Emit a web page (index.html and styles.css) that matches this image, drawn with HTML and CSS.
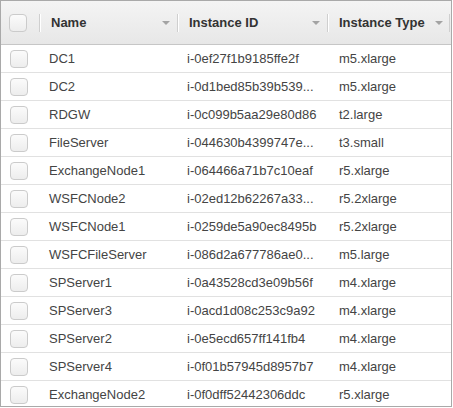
FILE: index.html
```html
<!DOCTYPE html>
<html>
<head>
<meta charset="utf-8">
<link rel="stylesheet" href="styles.css">
</head>
<body>
<div class="grid">
  <div class="row head">
    <div class="cbcell"><span class="cb"></span></div>
    <div class="hcell"><span>Name</span><i class="arrow"></i></div>
    <div class="hcell"><span>Instance ID</span><i class="arrow"></i></div>
    <div class="hcell last"><span>Instance Type</span><i class="arrow"></i></div>
    <div></div>
  </div>
  <div class="row"><div class="cbcell"><span class="cb"></span></div><div class="cell">DC1</div><div class="cell">i-0ef27f1b9185ffe2f</div><div class="cell type">m5.xlarge</div><div></div></div>
  <div class="row"><div class="cbcell"><span class="cb"></span></div><div class="cell">DC2</div><div class="cell">i-0d1bed85b39b539...</div><div class="cell type">m5.xlarge</div><div></div></div>
  <div class="row"><div class="cbcell"><span class="cb"></span></div><div class="cell">RDGW</div><div class="cell">i-0c099b5aa29e80d86</div><div class="cell type">t2.large</div><div></div></div>
  <div class="row"><div class="cbcell"><span class="cb"></span></div><div class="cell">FileServer</div><div class="cell">i-044630b4399747e...</div><div class="cell type">t3.small</div><div></div></div>
  <div class="row"><div class="cbcell"><span class="cb"></span></div><div class="cell">ExchangeNode1</div><div class="cell">i-064466a71b7c10eaf</div><div class="cell type">r5.xlarge</div><div></div></div>
  <div class="row"><div class="cbcell"><span class="cb"></span></div><div class="cell">WSFCNode2</div><div class="cell">i-02ed12b62267a33...</div><div class="cell type">r5.2xlarge</div><div></div></div>
  <div class="row"><div class="cbcell"><span class="cb"></span></div><div class="cell">WSFCNode1</div><div class="cell">i-0259de5a90ec8495b</div><div class="cell type">r5.2xlarge</div><div></div></div>
  <div class="row"><div class="cbcell"><span class="cb"></span></div><div class="cell">WSFCFileServer</div><div class="cell">i-086d2a677786ae0...</div><div class="cell type">m5.large</div><div></div></div>
  <div class="row"><div class="cbcell"><span class="cb"></span></div><div class="cell">SPServer1</div><div class="cell">i-0a43528cd3e09b56f</div><div class="cell type">m4.xlarge</div><div></div></div>
  <div class="row"><div class="cbcell"><span class="cb"></span></div><div class="cell">SPServer3</div><div class="cell">i-0acd1d08c253c9a92</div><div class="cell type">m4.xlarge</div><div></div></div>
  <div class="row"><div class="cbcell"><span class="cb"></span></div><div class="cell">SPServer2</div><div class="cell">i-0e5ecd657ff141fb4</div><div class="cell type">m4.xlarge</div><div></div></div>
  <div class="row"><div class="cbcell"><span class="cb"></span></div><div class="cell">SPServer4</div><div class="cell">i-0f01b57945d8957b7</div><div class="cell type">m4.xlarge</div><div></div></div>
  <div class="row"><div class="cbcell"><span class="cb"></span></div><div class="cell">ExchangeNode2</div><div class="cell">i-0f0dff52442306ddc</div><div class="cell type">r5.xlarge</div><div></div></div>
</div>
</body>
</html>
```
FILE: styles.css
```css
body {
  margin: 0;
  background: #fff;
  font-family: "Liberation Sans", Arial, sans-serif;
}
.grid {
  width: 452px;
  height: 407px;
  box-sizing: border-box;
  border: 1px solid #a9a9a9;
  overflow: hidden;
}
.row {
  display: grid;
  grid-template-columns: 38px 138px 150px 123px 1px;
  align-items: center;
  height: 28px;
  box-sizing: border-box;
  border-bottom: 1px solid #e1e1e1;
}
.head {
  height: 44px;
  border-bottom: 1px solid #c6c6c6;
  background: linear-gradient(#f4f4f4, #e7e7e7);
}
.cbcell {
  display: flex;
  align-items: center;
  padding-left: 9px;
}
.head .cbcell {
  padding-left: 8px;
}
.cb {
  display: block;
  width: 18px;
  height: 18px;
  box-sizing: border-box;
  border: 1px solid #cbcbcb;
  border-radius: 4px;
  background: linear-gradient(#fbfbfb, #ededed);
}
.hcell {
  position: relative;
  height: 100%;
  display: flex;
  align-items: center;
  justify-content: space-between;
  padding: 0 7px 0 12px;
  font-size: 13px;
  font-weight: bold;
  color: #333;
  white-space: nowrap;
}
.hcell::before {
  content: "";
  position: absolute;
  left: 0;
  top: 13px;
  width: 1px;
  height: 18px;
  background: #cfcfcf;
  box-shadow: 1px 0 0 #fff;
}
.hcell.last::after {
  content: "";
  position: absolute;
  right: 0;
  top: 13px;
  width: 1px;
  height: 18px;
  background: #cfcfcf;
}
.arrow {
  display: block;
  width: 0;
  height: 0;
  border-left: 4px solid transparent;
  border-right: 4px solid transparent;
  border-top: 4px solid #a3a3a3;
}
.cell {
  padding-left: 10px;
  font-size: 13px;
  color: #444;
  white-space: nowrap;
  overflow: hidden;
}
.cell.type {
  padding-left: 12px;
}
```
